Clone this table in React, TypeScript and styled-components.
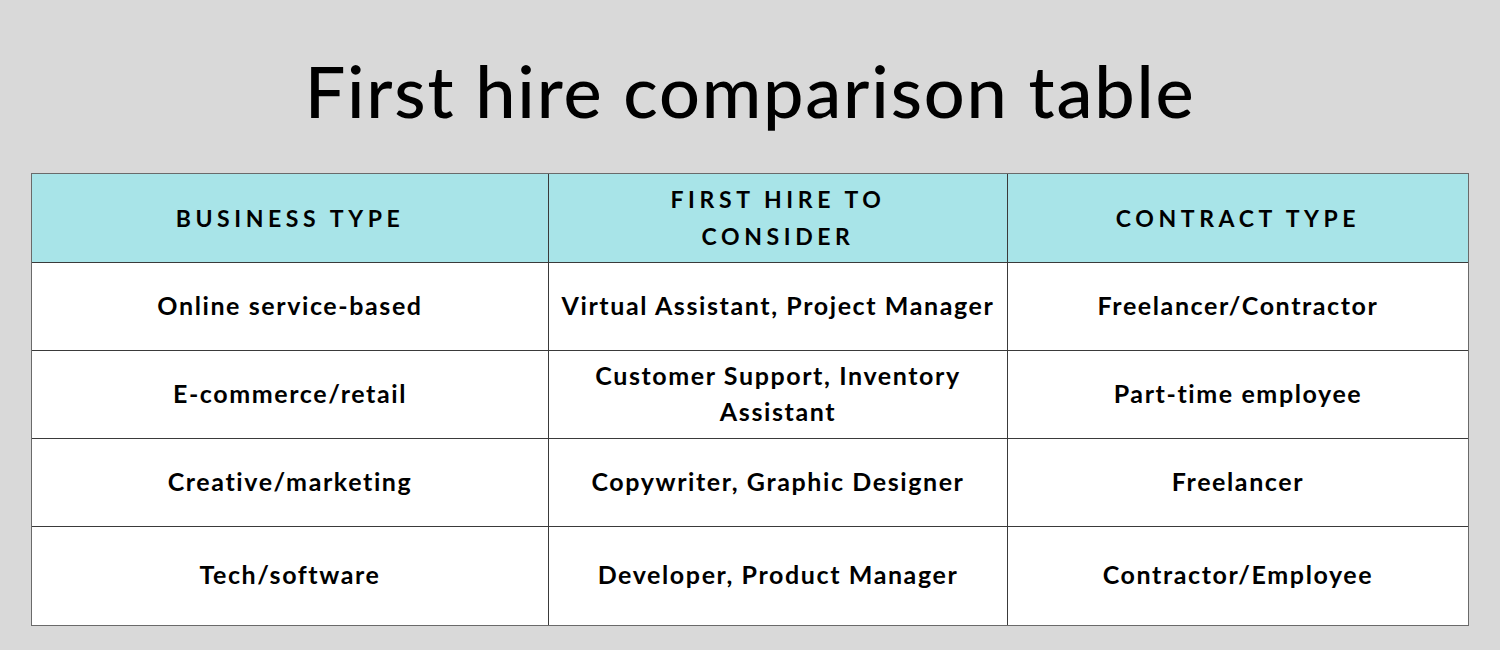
import React from 'react';
import styled, { createGlobalStyle } from 'styled-components';

const GlobalStyle = createGlobalStyle`
  html, body {
    margin: 0;
    padding: 0;
    background: #d9d9d9;
    font-family: Lato, 'Noto Sans', sans-serif;
    color: #000;
  }
`;

const HEADERS = ['BUSINESS TYPE', 'FIRST HIRE TO CONSIDER', 'CONTRACT TYPE'];

const ROWS = [
  ['Online service-based', 'Virtual Assistant, Project Manager', 'Freelancer/Contractor'],
  ['E-commerce/retail', 'Customer Support, Inventory Assistant', 'Part-time employee'],
  ['Creative/marketing', 'Copywriter, Graphic Designer', 'Freelancer'],
  ['Tech/software', 'Developer, Product Manager', 'Contractor/Employee'],
];

// row heights include the row's top rule
const ROW_HEIGHTS = [88, 88, 88, 99];

export default function App() {
  return (
    <>
      <GlobalStyle />
      <Page>
        <Title>First hire comparison table</Title>
        <Table>
          {HEADERS.map((h, i) => (
            <HeadCell key={h} $first={i === 0}>
              <HeadText $narrow={i === 1}>{h}</HeadText>
            </HeadCell>
          ))}
          {ROWS.map((row, r) =>
            row.map((cell, c) => (
              <Cell key={`${r}-${c}`} $first={c === 0} $height={ROW_HEIGHTS[r]}>
                <CellText $narrow={c === 1 && r === 1}>{cell}</CellText>
              </Cell>
            ))
          )}
        </Table>
      </Page>
    </>
  );
}

const Page = styled.div`
  width: 1500px;
  height: 650px;
  display: flex;
  flex-direction: column;
  align-items: center;
  box-sizing: border-box;
  padding-top: 46px;
`;

const Title = styled.h1`
  margin: 0;
  font-family: Lato, sans-serif;
  font-weight: 500;
  font-size: 72px;
  line-height: 88px;
  letter-spacing: 1.8px;
`;

const Table = styled.div`
  margin-top: 39px;
  width: 1438px;
  display: grid;
  grid-template-columns: 516px 459px 461px;
  border: 1px solid #6a6a6a;
  box-sizing: border-box;
  background: #fff;
`;

const HeadCell = styled.div<{ $first: boolean }>`
  height: 88px;
  display: flex;
  align-items: center;
  justify-content: center;
  background: #a8e4e8;
  border-left: ${(p) => (p.$first ? 'none' : '1px solid #3a3a3a')};
`;

const HeadText = styled.div<{ $narrow: boolean }>`
  max-width: ${(p) => (p.$narrow ? '260px' : 'none')};
  text-align: center;
  font-family: Lato, sans-serif;
  font-weight: 700;
  font-size: 23px;
  line-height: 37px;
  letter-spacing: 4.6px;
`;

const Cell = styled.div<{ $first: boolean; $height: number }>`
  height: ${(p) => p.$height}px;
  box-sizing: border-box;
  padding-bottom: 4px;
  display: flex;
  align-items: center;
  justify-content: center;
  border-left: ${(p) => (p.$first ? 'none' : '1px solid #3a3a3a')};
  border-top: 1px solid #3a3a3a;
`;

const CellText = styled.div<{ $narrow: boolean }>`
  max-width: ${(p) => (p.$narrow ? '420px' : 'none')};
  text-align: center;
  font-family: Lato, sans-serif;
  font-weight: 700;
  font-size: 25px;
  line-height: 36px;
  letter-spacing: 1.6px;
`;
